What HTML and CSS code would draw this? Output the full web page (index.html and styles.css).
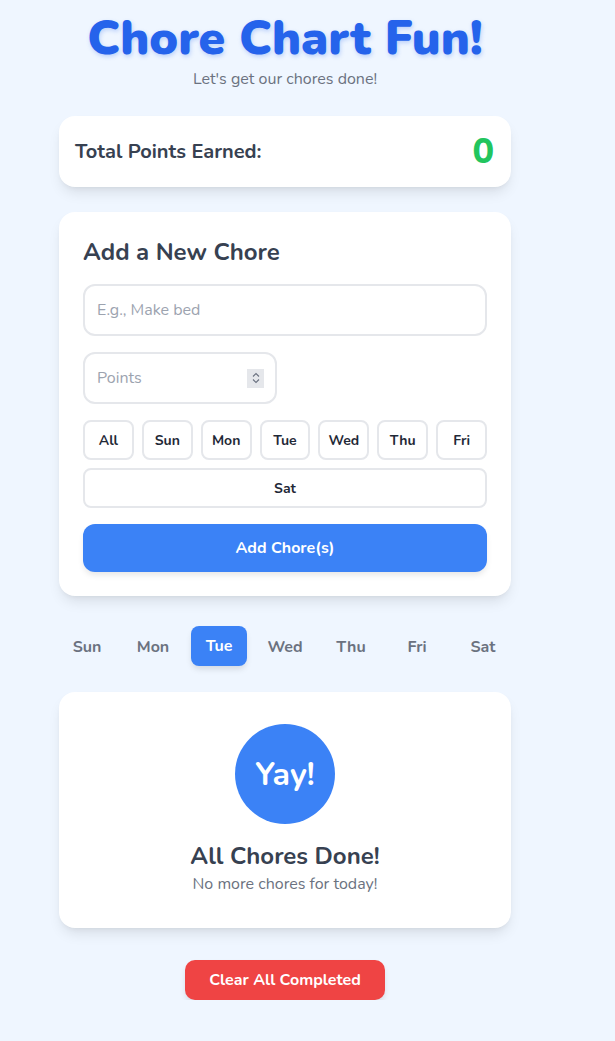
FILE: index.html
```html
<!DOCTYPE html>
<html lang="en">
<head>
<meta charset="utf-8">
<title>Chore Chart Fun!</title>
<link rel="stylesheet" href="styles.css">
</head>
<body>
<div class="page">
  <header class="header">
    <h1 class="title">Chore Chart Fun!</h1>
    <p class="subtitle">Let's get our chores done!</p>
  </header>

  <main class="container">
    <section class="card points-card">
      <span class="points-label">Total Points Earned:</span>
      <span class="points-value">0</span>
    </section>

    <section class="card add-card">
      <h2 class="add-title">Add a New Chore</h2>
      <div class="field">
        <input class="text-input" type="text" placeholder="E.g., Make bed">
      </div>
      <div class="field">
        <div class="points-input">
          <span class="placeholder">Points</span>
          <span class="spinner">
            <svg width="10" height="14" viewBox="0 0 10 14"><path d="M2 5.5 L5 2.5 L8 5.5 M2 8.5 L5 11.5 L8 8.5" fill="none" stroke="#6b7280" stroke-width="1.1"/></svg>
          </span>
        </div>
      </div>
      <div class="day-grid">
        <button class="day-btn">All</button>
        <button class="day-btn">Sun</button>
        <button class="day-btn">Mon</button>
        <button class="day-btn">Tue</button>
        <button class="day-btn">Wed</button>
        <button class="day-btn">Thu</button>
        <button class="day-btn">Fri</button>
        <button class="day-btn day-wide">Sat</button>
      </div>
      <button class="add-btn">Add Chore(s)</button>
    </section>

    <nav class="tabs">
      <div class="tab-cell"><button class="tab">Sun</button></div>
      <div class="tab-cell"><button class="tab">Mon</button></div>
      <div class="tab-cell"><button class="tab tab-active">Tue</button></div>
      <div class="tab-cell"><button class="tab">Wed</button></div>
      <div class="tab-cell"><button class="tab">Thu</button></div>
      <div class="tab-cell"><button class="tab">Fri</button></div>
      <div class="tab-cell"><button class="tab">Sat</button></div>
    </nav>

    <section class="card empty-card">
      <div class="yay">Yay!</div>
      <h3 class="empty-title">All Chores Done!</h3>
      <p class="empty-text">No more chores for today!</p>
    </section>

    <div class="clear-wrap">
      <button class="clear-btn">Clear All Completed</button>
    </div>
  </main>
</div>
</body>
</html>
```

FILE: styles.css
```css
* { box-sizing: border-box; }

html, body {
  margin: 0;
  padding: 0;
  background: #eff6ff;
}

body {
  font-family: "Nunito", "Open Sans", "Noto Sans", sans-serif;
  color: #374151;
}

.page {
  width: 570px;
  padding-top: 14px;
}

.header {
  text-align: center;
}

.title {
  margin: 0;
  font-size: 48px;
  line-height: 48px;
  font-weight: 900;
  color: #2563eb;
  text-shadow: 1px 2px 4px rgba(37, 99, 235, 0.25);
}

.subtitle {
  margin: 5px 0 0;
  font-size: 16px;
  line-height: 24px;
  color: #6b7280;
}

.container {
  width: 452px;
  margin: 0 auto;
}

.card {
  background: #ffffff;
  border-radius: 16px;
  box-shadow: 0 8px 14px -3px rgba(0, 0, 0, 0.1), 0 3px 6px -4px rgba(0, 0, 0, 0.1);
}

.points-card {
  margin-top: 25px;
  height: 71px;
  padding: 0 17px 0 16px;
  display: flex;
  align-items: center;
  justify-content: space-between;
}

.points-label {
  font-size: 20px;
  font-weight: 700;
  color: #374151;
}

.points-value {
  font-size: 36px;
  font-weight: 800;
  color: #22c55e;
}

.add-card {
  margin-top: 25px;
  padding: 24px 24px 24px;
}

.add-title {
  margin: 0 0 16px;
  font-size: 24px;
  line-height: 32px;
  font-weight: 700;
  color: #374151;
}

.field {
  margin-bottom: 16px;
}

.text-input {
  display: block;
  width: 100%;
  height: 52px;
  border: 2px solid #e5e7eb;
  border-radius: 12px;
  padding: 0 12px;
  font-family: inherit;
  font-size: 16px;
  color: #374151;
  background: #fff;
  outline: none;
}

.text-input::placeholder {
  color: #9ca3af;
}

.points-input {
  width: 194px;
  height: 52px;
  border: 2px solid #e5e7eb;
  border-radius: 12px;
  padding: 0 11px 0 12px;
  display: flex;
  align-items: center;
  justify-content: space-between;
}

.placeholder {
  font-size: 16px;
  color: #9ca3af;
}

.spinner {
  width: 17px;
  height: 19px;
  background: #e5e7eb;
  display: flex;
  align-items: center;
  justify-content: center;
}

.day-grid {
  display: grid;
  grid-template-columns: repeat(7, 1fr);
  gap: 8px;
}

.day-btn {
  height: 40px;
  border: 2px solid #e5e7eb;
  border-radius: 8px;
  background: #fff;
  font-family: inherit;
  font-size: 14px;
  font-weight: 700;
  color: #1f2937;
  padding: 0;
}

.day-wide {
  grid-column: 1 / -1;
}

.add-btn {
  display: block;
  width: 100%;
  height: 48px;
  margin-top: 16px;
  border: none;
  border-radius: 12px;
  background: #3b82f6;
  color: #fff;
  font-family: inherit;
  font-size: 16px;
  font-weight: 700;
  box-shadow: 0 4px 6px -1px rgba(0, 0, 0, 0.1);
}

.tabs {
  margin: 31px -5px 0;
  display: grid;
  grid-template-columns: repeat(7, 66px);
  justify-content: center;
}

.tab-cell {
  display: flex;
  justify-content: center;
}

.tab {
  height: 40px;
  padding: 0 15px;
  border: none;
  border-radius: 8px;
  background: transparent;
  font-family: inherit;
  font-size: 16px;
  font-weight: 700;
  color: #6b7280;
}

.tab-active {
  background: #3b82f6;
  color: #fff;
  transform: translateY(-1px);
  box-shadow: 0 4px 6px -1px rgba(0, 0, 0, 0.12);
}

.empty-card {
  margin-top: 25px;
  padding: 32px 24px 32px;
  display: flex;
  flex-direction: column;
  align-items: center;
}

.yay {
  width: 100px;
  height: 100px;
  border-radius: 50%;
  background: #3b82f6;
  color: #fff;
  font-size: 32px;
  font-weight: 700;
  display: flex;
  align-items: center;
  justify-content: center;
}

.empty-title {
  margin: 16px 0 0;
  font-size: 24px;
  line-height: 32px;
  font-weight: 700;
  color: #374151;
}

.empty-text {
  margin: 0;
  font-size: 16px;
  line-height: 24px;
  color: #6b7280;
}

.clear-wrap {
  display: flex;
  justify-content: center;
  margin-top: 32px;
}

.clear-btn {
  width: 200px;
  height: 40px;
  border: none;
  border-radius: 10px;
  background: #ef4444;
  color: #fff;
  font-family: inherit;
  font-size: 16px;
  font-weight: 700;
  box-shadow: 0 4px 6px -1px rgba(0, 0, 0, 0.12);
}
```
